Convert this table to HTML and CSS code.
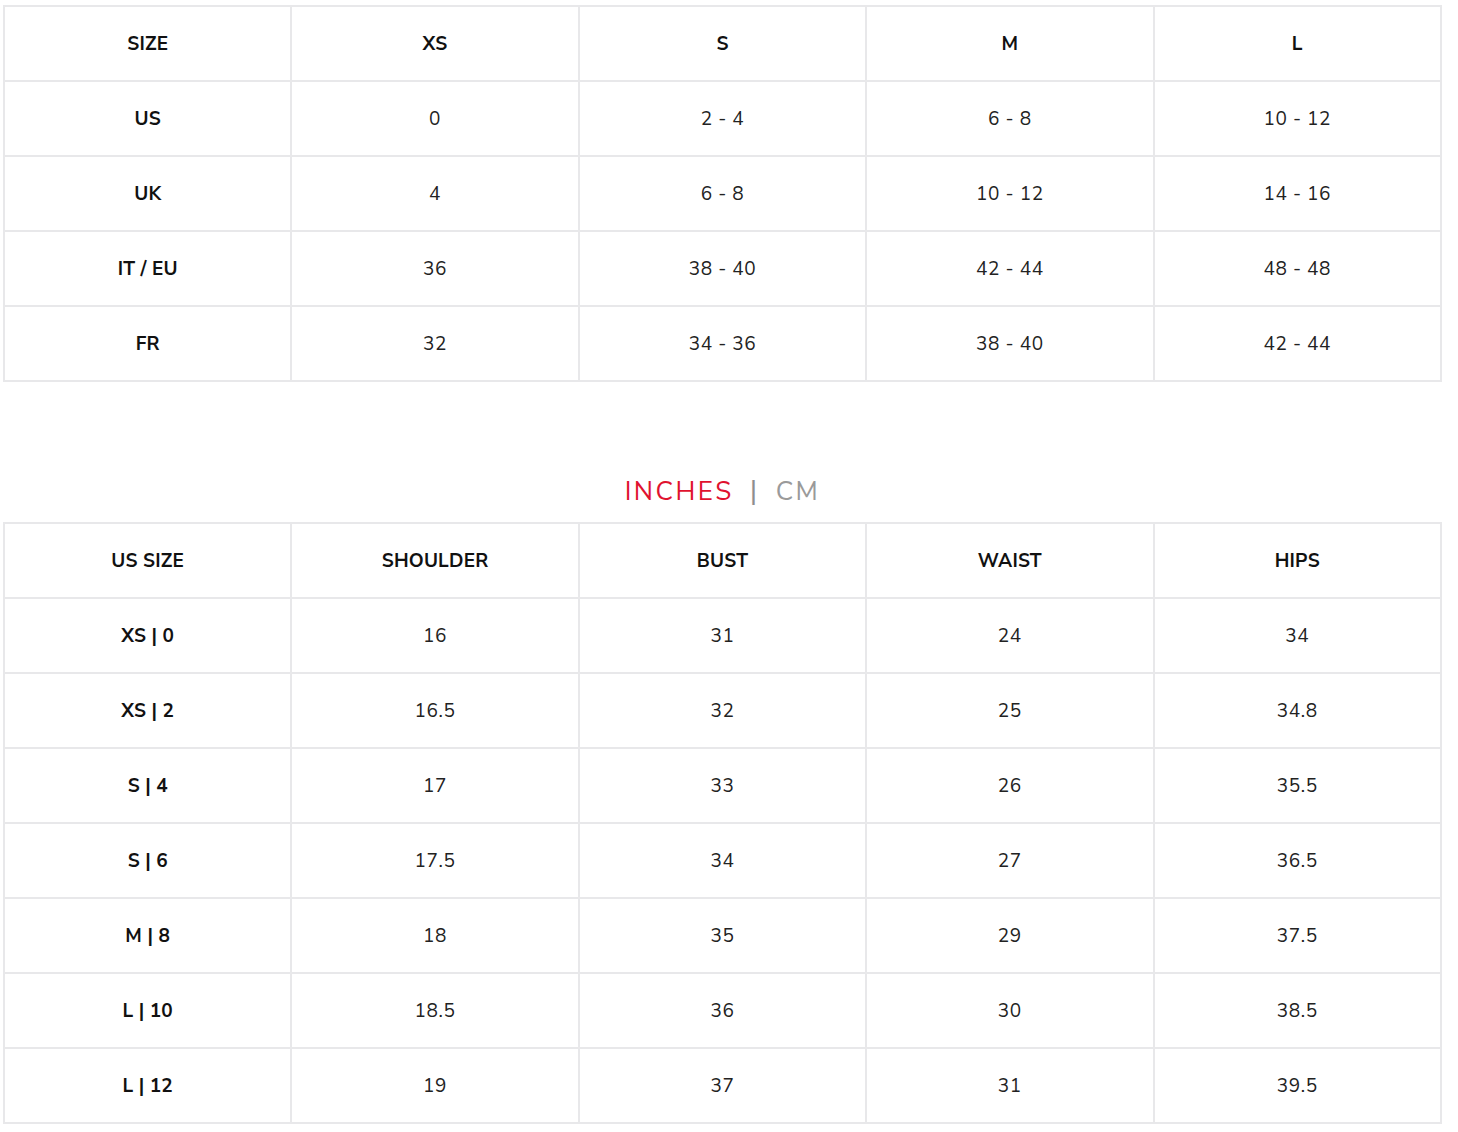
FILE: index.html
```html
<!DOCTYPE html>
<html>
<head>
<meta charset="utf-8">
<link rel="stylesheet" href="styles.css">
</head>
<body>
<div class="page">
  <table class="chart">
    <tr class="head"><th>SIZE</th><th>XS</th><th>S</th><th>M</th><th>L</th></tr>
    <tr><th>US</th><td>0</td><td>2 - 4</td><td>6 - 8</td><td>10 - 12</td></tr>
    <tr><th>UK</th><td>4</td><td>6 - 8</td><td>10 - 12</td><td>14 - 16</td></tr>
    <tr><th>IT / EU</th><td>36</td><td>38 - 40</td><td>42 - 44</td><td>48 - 48</td></tr>
    <tr><th>FR</th><td>32</td><td>34 - 36</td><td>38 - 40</td><td>42 - 44</td></tr>
  </table>

  <div class="units">
    <span class="unit active">INCHES</span>
    <span class="sep">|</span>
    <span class="unit">CM</span>
  </div>

  <table class="chart">
    <tr class="head"><th>US SIZE</th><th>SHOULDER</th><th>BUST</th><th>WAIST</th><th>HIPS</th></tr>
    <tr><th>XS | 0</th><td>16</td><td>31</td><td>24</td><td>34</td></tr>
    <tr><th>XS | 2</th><td>16.5</td><td>32</td><td>25</td><td>34.8</td></tr>
    <tr><th>S | 4</th><td>17</td><td>33</td><td>26</td><td>35.5</td></tr>
    <tr><th>S | 6</th><td>17.5</td><td>34</td><td>27</td><td>36.5</td></tr>
    <tr><th>M | 8</th><td>18</td><td>35</td><td>29</td><td>37.5</td></tr>
    <tr><th>L | 10</th><td>18.5</td><td>36</td><td>30</td><td>38.5</td></tr>
    <tr><th>L | 12</th><td>19</td><td>37</td><td>31</td><td>39.5</td></tr>
  </table>
</div>
</body>
</html>
```

FILE: styles.css
```css
html, body {
  margin: 0;
  padding: 0;
  background: #ffffff;
}
body {
  font-family: "Nunito Sans", Lato, "Noto Sans", sans-serif;
  color: #111111;
}
.page {
  width: 1439px;
  margin-left: 3px;
  padding-top: 5px;
}
.chart {
  width: 1439px;
  border-collapse: collapse;
  table-layout: fixed;
}
.chart th, .chart td {
  height: 73px;
  padding: 0;
  border: 2px solid #e8e8ea;
  text-align: center;
  vertical-align: middle;
  font-size: 19px;
  line-height: 24px;
}
.chart th {
  font-weight: 700;
  color: #111111;
  letter-spacing: 0.2px;
}
.chart td {
  font-weight: 400;
  color: #222222;
  letter-spacing: 0.6px;
}
.units {
  display: flex;
  justify-content: center;
  align-items: center;
  gap: 16px;
  height: 140px;
  padding-top: 78px;
  box-sizing: border-box;
  font-size: 26px;
  letter-spacing: 2.5px;
}
.unit {
  color: #9a9a9a;
}
.unit.active {
  color: #e0122f;
}
.sep {
  color: #8e8e8e;
  font-size: 28px;
}
```
